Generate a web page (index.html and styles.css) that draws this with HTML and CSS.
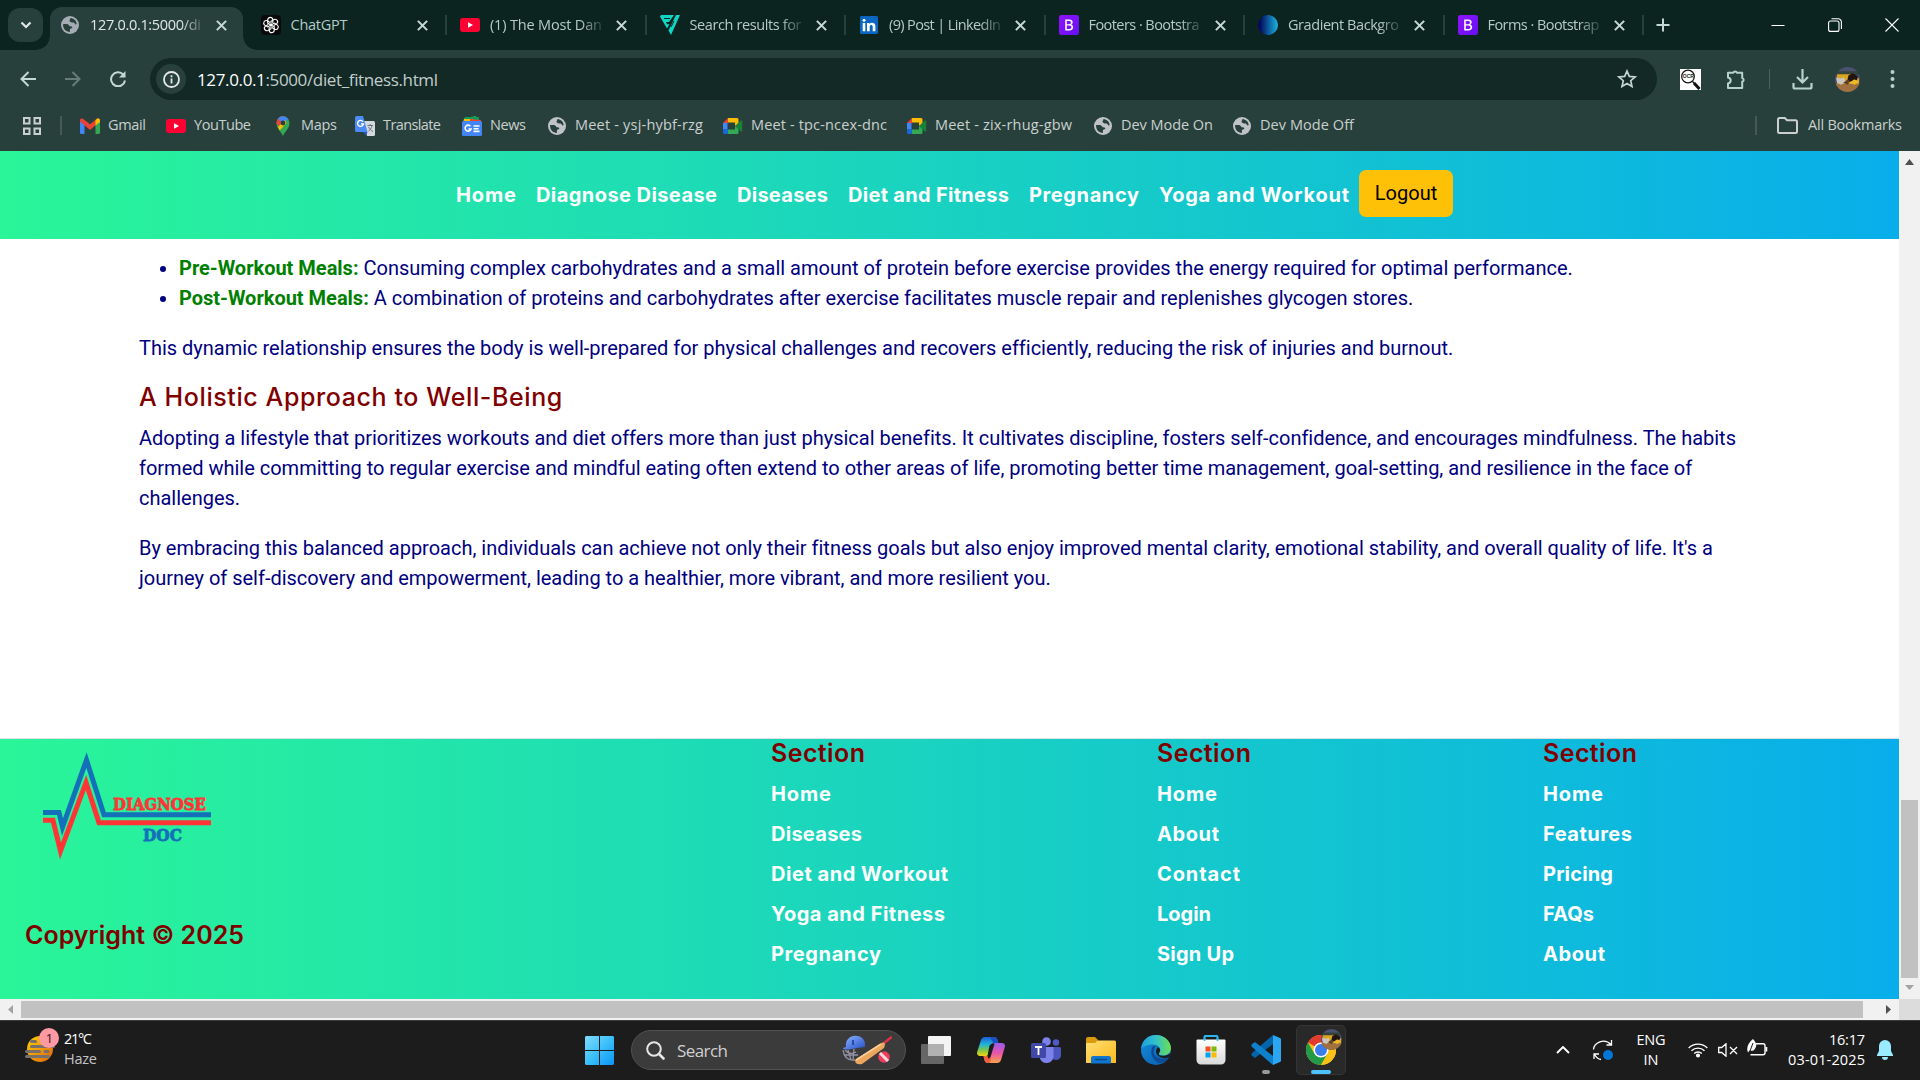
FILE: index.html
```html
<!DOCTYPE html>
<html lang="en">
<head>
<meta charset="utf-8">
<title>Diet and Fitness</title>
<link rel="stylesheet" href="styles.css">
</head>
<body>
<svg class="defs" width="0" height="0" aria-hidden="true">
  <defs>
    <linearGradient id="gBoot" x2="1" y2="1"><stop stop-color="#9013fe"/><stop offset="1" stop-color="#6610f2"/></linearGradient>
    <linearGradient id="gOrb"><stop offset=".1" stop-color="#020a5e"/><stop offset="1" stop-color="#1cb5e0"/></linearGradient>
    <linearGradient id="gWin" x2="1" y2="1"><stop stop-color="#7fdcff"/><stop offset=".5" stop-color="#3cc0fa"/><stop offset="1" stop-color="#0a94f5"/></linearGradient>
    <linearGradient id="gSun" x2="1" y2="1"><stop stop-color="#ffd500"/><stop offset="1" stop-color="#e0600a"/></linearGradient>
    <linearGradient id="gCopA" x2="0" y2="1"><stop stop-color="#1b5fd8"/><stop offset=".4" stop-color="#22b5d8"/><stop offset=".7" stop-color="#7fc744"/><stop offset="1" stop-color="#f5d312"/></linearGradient>
    <linearGradient id="gCopB" x2="0" y2="1"><stop stop-color="#9a5cf0"/><stop offset=".5" stop-color="#e855a8"/><stop offset="1" stop-color="#ffa24a"/></linearGradient>
    <linearGradient id="gFold" x2="1" y2="1"><stop stop-color="#ffdf72"/><stop offset="1" stop-color="#fcb91c"/></linearGradient>
    <linearGradient id="gEdgeA"><stop stop-color="#1b9de2"/><stop offset=".5" stop-color="#35c1c8"/><stop offset="1" stop-color="#6be04f"/></linearGradient>
    <linearGradient id="gEdgeB" x2="1" y2="1"><stop stop-color="#1490df"/><stop offset="1" stop-color="#0a58a8"/></linearGradient>
    <linearGradient id="gStore" x2="0" y2="1"><stop stop-color="#fff"/><stop offset="1" stop-color="#d9d9d9"/></linearGradient>
    <linearGradient id="gHelm" x2="1" y2="1"><stop stop-color="#8fb4ff"/><stop offset="1" stop-color="#2450c8"/></linearGradient>
    <symbol id="globe" viewBox="0 0 18 18"><circle cx="9" cy="9" r="9" fill="currentColor"/><path class="land" d="M9.5 2c3.500.3 6 3 6.200 6-1 .8-1.700.2-2-.6-.4-1-1.300-.8-2.300-.8-1 0-1.300-.8-2-.9-.9-.1-1.200-1.200-.6-1.800zM2.100 8l3.800.1c1.300.1 2 1 2.300 1.700.4.800 2.500.2 3 1.200.3.800-.3 1.400-1.300 1.400-1 .1-1 .8-1 1.600v1.900C5 15.900 1.800 13 2.100 8z"/></symbol>
    <symbol id="close" viewBox="0 0 10 10"><path d="M.8.8l8.400 8.400M9.200.8L.8 9.200" stroke="currentColor" stroke-width="1.900" fill="none"/></symbol>
    <symbol id="yt" viewBox="0 0 20 14"><rect width="20" height="14" rx="3" fill="#f03"/><path d="M8 4.200v5.600l5-2.800z" fill="#fff"/></symbol>
    <symbol id="boot" viewBox="0 0 20 20"><rect width="20" height="20" rx="2.500" fill="url(#gBoot)"/><path d="M6.200 4.500h4.300c2 0 3.200 1 3.200 2.700 0 1.200-.7 2-1.700 2.400 1.400.3 2.200 1.300 2.200 2.700 0 2-1.400 3.200-3.700 3.200H6.200zM7.800 6v3.200h2.300c1.200 0 1.900-.6 1.900-1.600S11.300 6 10.200 6zM7.800 10.500V14h2.500c1.400 0 2.100-.6 2.100-1.700s-.8-1.800-2.200-1.800z" fill="#fff"/></symbol>
    <symbol id="meet" viewBox="0 0 20 16"><path d="M5 0v5H0z" fill="#ea4335"/><path d="M0 5h4.500v6H0z" fill="#4285f4"/><path d="M0 11h5v5H1.500A1.500 1.500 0 010 14.500z" fill="#1967d2"/><path d="M5 0h9a1.500 1.500 0 011.500 1.500V6L12 8V4.500H5z" fill="#fbbc04"/><path d="M5 11.500h7V8l3.500 2v4.500A1.500 1.500 0 0114 16H5z" fill="#34a853"/><path d="M12 8l6-5.500c.6-.5 1.200-.2 1.200.5v10c0 .7-.6 1-1.200.5z" fill="#188038"/></symbol>
    <symbol id="face" viewBox="0 0 24 24"><clipPath id="fc"><circle cx="12" cy="12" r="12"/></clipPath><g clip-path="url(#fc)"><path fill="#4a5270" d="M0 0h24v24H0z"/><path fill="#34443c" d="M0 4h24v4H0z"/><path fill="#dba520" d="M2 7h14l7 4v6H2z"/><path fill="#a0703f" d="M0 16h24v8H0z"/><path fill="#20150f" d="M13 8l4-2 5 3-1 4-3-1-3 3-3-3z"/><path fill="#c9c4c0" d="M1 10l4 1 4-1 1 4-4 3-4-2z"/><path fill="#5d4029" d="M8 15l4-3 3 2-3 3z"/><path fill="#f0ba27" d="M13 15l6-3 4 2-4 3z"/></g></symbol>
  </defs>
</svg>

<header class="browser">
  <div class="tabstrip">
    <button class="tab-search"><svg width="12" height="8" viewBox="0 0 12 8"><path d="M1.500 1.500L6 6l4.500-4.500" fill="none" stroke="#dfe8e6" stroke-width="2.200"/></svg></button>
    <div class="tabs">
      <div class="tab active"><svg class="fav globe"><use href="#globe"/></svg><span class="title"><span data-fit="111">127.0.0.1:5000/di</span></span><svg class="x"><use href="#close"/></svg></div>
      <div class="tab"><svg class="fav" viewBox="0 0 20 20"><rect width="20" height="20" rx="4" fill="#0a0a0a"/><g fill="none" stroke="#fff" stroke-width="1.100"><path id="petal" d="M10 10.300V6.200l3-1.700c3-1 5 2.500 2.500 4.400l-2.800 1.600"/><use href="#petal" transform="rotate(60 10 10)"/><use href="#petal" transform="rotate(120 10 10)"/><use href="#petal" transform="rotate(180 10 10)"/><use href="#petal" transform="rotate(240 10 10)"/><use href="#petal" transform="rotate(300 10 10)"/></g></svg><span class="title short"><span data-fit="57">ChatGPT</span></span><svg class="x"><use href="#close"/></svg></div>
      <div class="tab"><svg class="fav" viewBox="0 0 20 14"><use href="#yt"/></svg><span class="title"><span data-fit="112">(1) The Most Dan</span></span><svg class="x"><use href="#close"/></svg></div>
      <div class="tab"><svg class="fav" viewBox="0 0 20 20"><path d="M1 0h13L9 7H6l1 2.300h2.500L7 13.500 0 1.500zM16 0h4L11 20l-2.500-4.500z" fill="#12d6c5"/><path d="M4 3.500h6M11 12l3-6" stroke="#0b2420"/></svg><span class="title"><span data-fit="112">Search results for</span></span><svg class="x"><use href="#close"/></svg></div>
      <div class="tab"><svg class="fav" viewBox="0 0 20 20"><rect x="1" y="1" width="18" height="18" rx="1.500" fill="#0a66c2"/><path d="M3.700 8h2.600v8.200H3.700zM8 8h2.500v1.200c1.400-2.200 5.900-2 5.900 2.200v4.800h-2.700v-4.400c0-2.400-3-2.300-3 0v4.400H8z" fill="#fff"/><circle cx="5" cy="5.300" r="1.500" fill="#fff"/></svg><span class="title"><span data-fit="112">(9) Post | LinkedIn</span></span><svg class="x"><use href="#close"/></svg></div>
      <div class="tab"><svg class="fav"><use href="#boot"/></svg><span class="title"><span data-fit="111">Footers · Bootstra</span></span><svg class="x"><use href="#close"/></svg></div>
      <div class="tab"><svg class="fav" viewBox="0 0 20 20"><circle cx="10" cy="10" r="10" fill="url(#gOrb)"/></svg><span class="title"><span data-fit="111">Gradient Backgro</span></span><svg class="x"><use href="#close"/></svg></div>
      <div class="tab"><svg class="fav"><use href="#boot"/></svg><span class="title"><span data-fit="112">Forms · Bootstrap</span></span><svg class="x"><use href="#close"/></svg></div>
    </div>
    <svg class="newtab" width="14" height="14" viewBox="0 0 14 14"><path d="M7 .5v13M.5 7h13" stroke="#c5d8d4" stroke-width="2"/></svg>
    <div class="winctl">
      <svg width="14" height="14" viewBox="0 0 14 14"><path d="M.5 7.500h13" stroke="#fff"/></svg>
      <svg width="14" height="14" viewBox="0 0 14 14" fill="none" stroke="#fff" stroke-width="1.100"><rect x=".6" y="3" width="10.400" height="10.400" rx="2"/><path d="M3.500.7H10A3.300 3.300 0 0113.400 4v7"/></svg>
      <svg width="14" height="14" viewBox="0 0 14 14"><path d="M.5.5l13 13M13.500.5l-13 13" stroke="#fff" stroke-width="1.100"/></svg>
    </div>
  </div>

  <div class="toolbar">
    <div class="navbtns">
      <svg width="16" height="16" viewBox="0 0 16 16"><path d="M16 8H1.500M8.500 1L1.500 8l7 7" fill="none" stroke="#c1d8d3" stroke-width="2"/></svg>
      <svg width="16" height="16" viewBox="0 0 16 16"><path d="M0 8h14.500M7.500 1l7 7-7 7" fill="none" stroke="#667c78" stroke-width="2"/></svg>
      <svg width="16" height="16" viewBox="0 0 16 16"><path d="M13.200 3.500A7 7 0 1015 9.500" fill="none" stroke="#c1d8d3" stroke-width="2"/><path d="M15.500 0v6.500H9z" fill="#c1d8d3"/></svg>
    </div>
    <div class="omnibox">
      <span class="info"><svg width="17" height="17" viewBox="0 0 17 17"><circle cx="8.500" cy="8.500" r="7.500" fill="none" stroke="#e3e9e8" stroke-width="1.800"/><path d="M8.500 7.500v5M8.500 4.300v2" stroke="#e3e9e8" stroke-width="1.800"/></svg></span>
      <span class="url" data-fit="241"><b>127.0.0.1</b>:5000/diet_fitness.html</span>
      <svg class="star" width="20" height="20" viewBox="0 0 20 20"><path d="M10 2l2.300 5.400 5.800.5-4.400 3.800 1.300 5.700-5-3-5 3 1.300-5.700L1.900 7.900l5.800-.5z" fill="none" stroke="#c6d3d0" stroke-width="1.700"/></svg>
    </div>
    <div class="tools">
      <svg width="21" height="21" viewBox="0 0 21 21"><path fill="#fff" d="M0 0h21v21H0z"/><circle cx="8" cy="7.500" r="6.300" fill="#fff" stroke="#111" stroke-width="1.200"/><path d="M12.500 12.500l2 2" stroke="#111" stroke-width="1.500"/><path d="M14 14l5.500 6" stroke="#111" stroke-width="3"/><text x="2.800" y="9.300" class="ocr">OCR</text></svg>
      <svg class="puzzle" width="21" height="21" viewBox="0 0 21 21"><path d="M2 3.800h5.300a1.900 1.900 0 013.600 0h5.300v5.300a1.900 1.900 0 010 3.700v6.200H2v-4.500c3.600-1 3.600-5.200 0-6z" fill="none" stroke="#b5d2cc" stroke-width="2" stroke-linejoin="round"/></svg>
      <i class="vline"></i>
      <svg class="dl" width="21" height="21" viewBox="0 0 21 21"><path d="M10.500 0v13M5 8l5.500 5.500L16 8M1.500 14v4a1.500 1.500 0 001.500 1.500h15a1.500 1.500 0 001.500-1.500v-4" fill="none" stroke="#b5d2cc" stroke-width="2.200"/></svg>
      <svg class="avatar" width="25" height="25"><use href="#face"/></svg>
      <svg class="dots" width="5" height="18" viewBox="0 0 5 18" fill="#b5d2cc"><circle cx="2.500" cy="2" r="2"/><circle cx="2.500" cy="9" r="2"/><circle cx="2.500" cy="16" r="2"/></svg>
    </div>
  </div>

  <div class="bookmarks">
    <svg class="apps" width="18" height="18" viewBox="0 0 18 18" fill="none" stroke="#c9d0ce" stroke-width="2"><path d="M1 1h5.500v5.500H1zM11.500 1H17v5.500h-5.500zM1 11.500h5.500V17H1zM11.500 11.500H17V17h-5.500z"/></svg>
    <i class="bar"></i>
    <div class="marks">
      <div><svg viewBox="0 0 20 16"><path d="M0 3v11.500A1.500 1.500 0 001.500 16h3V6z" fill="#4285f4"/><path d="M15.500 6v10h3a1.500 1.500 0 001.500-1.500V3z" fill="#34a853"/><path d="M0 2.500C0 .5 2 0 3.300 1L10 6.200 16.700 1C18 0 20 .5 20 2.500v1L10 12 0 3.500z" fill="#ea4335"/><path d="M15.500 2l1.200-1C18 0 20 .5 20 2.500V4l-4.500 3.500z" fill="#fbbc04"/></svg><span data-fit="38">Gmail</span></div>
      <div><svg viewBox="0 0 20 14"><use href="#yt"/></svg><span data-fit="57">YouTube</span></div>
      <div><svg viewBox="0 0 20 20"><path d="M10 20c-1.200-3.500-6.500-7-6.500-13.200A6.500 6.500 0 0116.500 6.800C16.500 13 11.200 16.500 10 20z" fill="#34a853"/><path d="M3.500 7A6.500 6.500 0 0113 1l-7 9c-1.500-1-2.500-2-2.500-3z" fill="#ea4335"/><path d="M5 2.600A6.500 6.500 0 0115.500 3.500L10 8z" fill="#4285f4"/><path d="M5 11l7-7 1.500 3-6.800 7.500z" fill="#fbbc04"/><circle cx="10" cy="7" r="2.400" fill="#28403c"/></svg><span data-fit="36">Maps</span></div>
      <div><svg viewBox="0 0 20 20"><path d="M8 5h10.500A1.500 1.500 0 0120 6.500v12a1.500 1.500 0 01-1.500 1.500H12z" fill="#d5d8dc"/><path d="M1.500 0H8l4.500 16H1.500A1.500 1.500 0 010 14.500v-13A1.500 1.500 0 011.500 0z" fill="#4c8bf5"/><path d="M8 16h4.500L11 19.500z" fill="#2255c4"/><path d="M8 5.700A3 3 0 108.500 8H6" fill="none" stroke="#fff" stroke-width="1.300"/><path d="M12.500 9.500H18M15.200 8v1.500M17 9.500c-.5 3-2 4.500-3.500 5.500M13.500 11c1 2 2.500 3.500 4.500 4.500" fill="none" stroke="#6b7480"/></svg><span data-fit="58">Translate</span></div>
      <div><svg viewBox="0 0 20 20"><path d="M2 2l12-2 1 6H3z" fill="#34a853"/><path d="M3 1h14v5H3z" fill="#0c9d58"/><path d="M2 3h9l-1 4H1z" fill="#fbbc04"/><path d="M8 3l11 1-1 4H8z" fill="#ea4335"/><rect y="5" width="20" height="15" rx="1.500" fill="#4285f4"/><path d="M8.500 10.300A3 3 0 109 13H6.500M11.500 10h6M11.500 12.700h5M11.500 15.400h6" fill="none" stroke="#fff" stroke-width="1.600"/></svg><span data-fit="36">News</span></div>
      <div><svg class="globe2"><use href="#globe"/></svg><span data-fit="128">Meet - ysj-hybf-rzg</span></div>
      <div><svg viewBox="0 0 20 16"><use href="#meet"/></svg><span data-fit="136">Meet - tpc-ncex-dnc</span></div>
      <div><svg viewBox="0 0 20 16"><use href="#meet"/></svg><span data-fit="137">Meet - zix-rhug-gbw</span></div>
      <div><svg class="globe2"><use href="#globe"/></svg><span data-fit="92">Dev Mode On</span></div>
      <div><svg class="globe2"><use href="#globe"/></svg><span data-fit="94">Dev Mode Off</span></div>
    </div>
    <i class="bar right"></i>
    <div class="all"><svg width="21" height="17" viewBox="0 0 21 17"><path d="M1 2.500A1.500 1.500 0 012.500 1h5.300l2.200 2.300h8.500A1.500 1.500 0 0120 4.800v9.700a1.500 1.500 0 01-1.500 1.500h-16A1.500 1.500 0 011 14.500z" fill="none" stroke="#c9d0ce" stroke-width="2"/></svg><span data-fit="94">All Bookmarks</span></div>
  </div>
</header>

<div class="viewport">
  <div class="page">
    <nav class="sitenav">
      <a data-fit="60">Home</a><a data-fit="181">Diagnose Disease</a><a data-fit="91">Diseases</a><a data-fit="161">Diet and Fitness</a><a data-fit="110">Pregnancy</a><a data-fit="190">Yoga and Workout</a>
      <button class="logout">Logout</button>
    </nav>
    <main class="content">
      <ul>
        <li><strong>Pre-Workout Meals:</strong> Consuming complex carbohydrates and a small amount of protein before exercise provides the energy required for optimal performance.</li>
        <li><strong>Post-Workout Meals:</strong> A combination of proteins and carbohydrates after exercise facilitates muscle repair and replenishes glycogen stores.</li>
      </ul>
      <p>This dynamic relationship ensures the body is well-prepared for physical challenges and recovers efficiently, reducing the risk of injuries and burnout.</p>
      <h5><span data-fit="423">A Holistic Approach to Well-Being</span></h5>
      <p>Adopting a lifestyle that prioritizes workouts and diet offers more than just physical benefits. It cultivates discipline, fosters self-confidence, and encourages mindfulness. The habits formed while committing to regular exercise and mindful eating often extend to other areas of life, promoting better time management, goal-setting, and resilience in the face of challenges.</p>
      <p>By embracing this balanced approach, individuals can achieve not only their fitness goals but also enjoy improved mental clarity, emotional stability, and overall quality of life. It's a journey of self-discovery and empowerment, leading to a healthier, more vibrant, and more resilient you.</p>
    </main>
    <footer class="sitefoot">
      <div class="brand">
        <svg class="logo" width="170" height="112" viewBox="0 0 170 112" fill="none" stroke-width="5" stroke-miterlimit="10">
          <path d="M1 64.500h16l3.500 14.500L44.500 12l17.500 54.800h107" stroke="#1470b8"/>
          <path d="M1 72.300h10L18.500 103 44 34.500l13 40.300h112" stroke="#ff3434"/>
          <text x="71" y="61.500" textLength="93" lengthAdjust="spacingAndGlyphs" class="l1">DIAGNOSE</text>
          <text x="101" y="92.500" textLength="39" lengthAdjust="spacingAndGlyphs" class="l2">DOC</text>
        </svg>
        <h5><span data-fit="219">Copyright © 2025</span></h5>
      </div>
      <div class="col"><h5><span data-fit="94">Section</span></h5><a data-fit="60">Home</a><a data-fit="91">Diseases</a><a data-fit="177">Diet and Workout</a><a data-fit="174">Yoga and Fitness</a><a data-fit="110">Pregnancy</a></div>
      <div class="col"><h5><span data-fit="94">Section</span></h5><a data-fit="60">Home</a><a data-fit="62">About</a><a data-fit="83">Contact</a><a data-fit="54">Login</a><a data-fit="77">Sign Up</a></div>
      <div class="col"><h5><span data-fit="94">Section</span></h5><a data-fit="60">Home</a><a data-fit="89">Features</a><a data-fit="70">Pricing</a><a data-fit="51">FAQs</a><a data-fit="62">About</a></div>
    </footer>
  </div>
  <div class="vscroll"><svg width="9" height="6" viewBox="0 0 9 6"><path d="M0 6l4.500-6L9 6z" fill="#505050"/></svg><i></i><svg width="9" height="5" viewBox="0 0 9 5"><path d="M0 0l4.500 5L9 0z" fill="#a3a3a3"/></svg></div>
  <div class="hscroll"><svg width="5" height="9" viewBox="0 0 5 9"><path d="M5 0L0 4.500 5 9z" fill="#a3a3a3"/></svg><i></i><svg width="5" height="9" viewBox="0 0 5 9"><path d="M0 0l5 4.500L0 9z" fill="#505050"/></svg></div>
  <div class="corner"></div>
</div>

<div class="taskbar">
  <div class="weather">
    <svg width="36" height="36" viewBox="0 0 36 36"><circle cx="16" cy="22" r="13" fill="url(#gSun)"/><path d="M7.500 14.500h4M7.500 19.500h22M2.500 24.500h13M21 24.500h3M2.500 29.500h22" stroke="#77716a" stroke-width="3" stroke-linecap="round"/><circle cx="25" cy="11" r="10" fill="#ff99a4"/><text x="21.500" y="16" class="badge">1</text></svg>
    <div><span data-fit="28">21°C</span><span class="dim" data-fit="33">Haze</span></div>
  </div>
  <div class="dock">
    <span class="cell"><svg width="29" height="29" viewBox="0 0 29 29"><path d="M1 0h13v14H0V1zM15 0h13l1 1v13H15zM0 15h14v14H1l-1-1zM15 15h14v13l-1 1H15z" fill="url(#gWin)"/></svg></span>
    <div class="search">
      <svg width="19" height="19" viewBox="0 0 19 19"><circle cx="8" cy="8" r="6.800" fill="none" stroke="#e6e6e6" stroke-width="2"/><path d="M13 13l4.500 4.500" stroke="#e6e6e6" stroke-width="2.600" stroke-linecap="round"/></svg>
      <span data-fit="51">Search</span>
      <svg class="cricket" width="50" height="30" viewBox="0 0 50 30"><path d="M1 15c1 7 5 11 12 10M3 15c3 4 8 4 11 2M6 15l3 10M12 14l-1 11M2 20h14" fill="none" stroke="#9591a8" stroke-width="1.300"/><path d="M4 12C3 4 9 0 15 1c6 0 9 6 8 11l-8 1c-4 1-9 2-14 1 0-1 1-2 3-2z" fill="url(#gHelm)"/><path d="M11 5v5" stroke="#18388d" stroke-width="1.500"/><path d="M42 8l7-5.500" stroke="#d9324a" stroke-width="2.500" stroke-linecap="round"/><path d="M13 25L38 9c3-2 5-2 5 1l-1 3-22 16c-4 1-7 0-7-4z" fill="#eba75e"/><path d="M14 25L39 9" stroke="#ffd09a" stroke-width="1.500"/><circle cx="42" cy="22" r="5.800" fill="#ef3d5c"/><path d="M38 18l8 8" stroke="#ffd9df" stroke-width="3"/></svg>
    </div>
    <span class="cell"><svg width="30" height="28" viewBox="0 0 30 28"><rect x="7" width="23" height="20" rx="1" fill="#f4f4f4"/><rect y="8" width="23" height="20" rx="1" fill="#666"/><path d="M7 8h16v12H7z" fill="#b1b1b1"/></svg></span>
    <span class="cell"><svg width="28" height="26" viewBox="0 0 28 26"><path fill-rule="evenodd" d="M8 0h9c2 0 3 1 3.500 3l.8 3h-3.800c-2 0-3 1-3.500 3l-2.500 8c-.6 1.500-1.500 2-3 2H3c-2.500 0-3.500-2-2.700-4.500L4 3c.7-2 2-3 4-3z" fill="url(#gCopA)"/><path d="M13 0h4c2 0 3 1 3.500 3l.8 3h-5z" fill="#1d4fc4"/><path d="M20 26h-9c-2 0-3-1-3.500-3l-1-4H9c2 0 3-1 3.500-3L15 9c.6-2 1.500-3 3.500-3H25c2.500 0 3.500 2 2.700 4.500L24 23c-.7 2-2 3-4 3z" fill="url(#gCopB)"/><path d="M6.500 19h4.500c2 0 3 1 3 3l-1 4h-2c-2 0-3-1-3.500-3z" fill="#f0603c"/><path d="M12.500 8.500l2.500-2 2.500.5-4 13-2 2-1-3z" fill="#1c1c1c"/></svg></span>
    <span class="cell"><svg width="30" height="27" viewBox="0 0 30 27"><circle cx="25" cy="5.500" r="3.200" fill="#5059c9"/><path d="M20 10h8.500A1.500 1.500 0 0130 11.500V18a5 5 0 01-9 3z" fill="#4b53bc"/><circle cx="15.500" cy="4.500" r="4.300" fill="#7b83eb"/><path d="M9 10h13.500v9.500a7 7 0 01-13.500 2z" fill="#7b83eb"/><rect y="6" width="15" height="15" rx="1.500" fill="#4048a8"/><path d="M4 10h7M7.500 10v8" stroke="#fff" stroke-width="1.800"/></svg></span>
    <span class="cell"><svg width="30" height="27" viewBox="0 0 30 27"><path d="M0 2a2 2 0 012-2h7l3 3v5H0z" fill="#d99c0c"/><path d="M0 6h9l3-2.500h16.500A1.500 1.500 0 0130 5v21H0z" fill="url(#gFold)"/><path d="M5 26.500V21a2 2 0 012-2h16a2 2 0 012 2v5.500z" fill="#1077cf"/><path d="M9 22.500h12" stroke="#0a4d8c" stroke-width="1.500"/></svg></span>
    <span class="cell"><svg width="30" height="30" viewBox="0 0 30 30"><circle cx="15" cy="15" r="15" fill="url(#gEdgeB)"/><path d="M0 14C1 5 7 0 15 0c9 0 15 7 15 13 0 5-4 7.500-8 7.500-3 0-4.500-1-4-2 3-4 0-9-6-9-5 0-10 2-12 4.500z" fill="url(#gEdgeA)"/><path d="M12 11c-4 6-1 15 7 17 4 0 7-3 9-6-8 4-17 0-15-7 .5-2 1-3 2-3.700z" fill="#0c4c96"/><path d="M18.500 17c-.8 1.500-1 2.500 0 3.300 3 1.200 8 .5 11.500-2.300l-1.500 4c-6 2.500-13 0-13.500-5.500 0-2 1-3.500 2-4.300 2 .8 3 3 1.500 4.800z" fill="#1c1c1c"/></svg></span>
    <span class="cell"><svg width="30" height="30" viewBox="0 0 30 30"><path d="M8.500 6V2a1 1 0 011-1h11a1 1 0 011 1v4" fill="none" stroke="#2db4ee" stroke-width="2"/><path d="M.5 5.500A1 1 0 011.500 4.500h27a1 1 0 011 1V25a4.500 4.500 0 01-4.500 4.500H5A4.500 4.500 0 01.500 25z" fill="url(#gStore)"/><path d="M8.500 6V2a1 1 0 011-1h11a1 1 0 011 1v4" fill="none" stroke="#2db4ee" stroke-width="1.600"/><path d="M9.500 11.500h5v5h-5z" fill="#f25022"/><path d="M15.500 11.500h5v5h-5z" fill="#7fba00"/><path d="M9.500 17.500h5v5h-5z" fill="#00a4ef"/><path d="M15.500 17.500h5v5h-5z" fill="#ffb900"/></svg></span>
    <span class="cell run"><svg width="30" height="30" viewBox="0 0 30 30"><path d="M22 0v9L4 23 .5 20.500v-2z" fill="#0065a9"/><path d="M22 30v-9L4 7 .5 9.500v2z" fill="#0f80cc"/><path d="M22 0l7 3a2 2 0 011 2v20a2 2 0 01-1 2l-7 3z" fill="#2aa6f2"/></svg><i></i></span>
    <span class="cell run on"><svg width="30" height="30" viewBox="0 0 30 30"><circle cx="15" cy="15" r="15" fill="#fbc116"/><path d="M15 15L2 7.500A15 15 0 0128 7.500H15z" fill="#e33b2e"/><path d="M2 7.500A15 15 0 0015 30l6.500-11.200L15 15 8.500 18.800z" fill="#219b47"/><path d="M15 7.500h13A15 15 0 0115 30l6.500-11.200z" fill="#fbc116"/><circle cx="15" cy="15" r="7.500" fill="#fff"/><circle cx="15" cy="15" r="6" fill="#3b7ded"/></svg><svg class="who"><use href="#face"/></svg><i></i></span>
  </div>
  <div class="tray">
    <svg width="14" height="8" viewBox="0 0 14 8"><path d="M1 7l6-6 6 6" fill="none" stroke="#fff" stroke-width="1.900"/></svg>
    <svg class="sync" width="22" height="22" viewBox="0 0 22 22"><path d="M1.500 10.500C2 4 12-1.500 19 5.500M19.500 1v5h-5M9 20.500C6 20 4 18 2.500 15.500M2 20v-5h5" fill="none" stroke="#fff" stroke-width="1.300"/><circle cx="16" cy="16" r="5" fill="#0078d7"/></svg>
    <div class="lang"><span data-fit="29">ENG</span><span data-fit="15">IN</span></div>
    <svg class="wifi" width="20" height="16" viewBox="0 0 20 16" fill="none" stroke="#fff" stroke-width="1.400"><path d="M.7 6a13 13 0 0118.600 0M3.500 8.800a9.200 9.200 0 0113 0M6.200 11.500a5.400 5.400 0 017.600 0"/><circle cx="10" cy="13.500" r="1.400" fill="#fff"/></svg>
    <svg class="mute" width="20" height="14" viewBox="0 0 20 14" fill="none" stroke="#fff" stroke-width="1.300"><path d="M.7 4.500h3L8 .8v12.400L3.700 9.500h-3zM12 4l7 7M19 4l-7 7"/></svg>
    <svg class="batt" width="21" height="18" viewBox="0 0 21 18"><path d="M9 4.700h7a2 2 0 012 2v7a2 2 0 01-2 2H3.500" fill="none" stroke="#fff" stroke-width="1.400"/><path d="M18.500 8h1.800v4.500h-1.800z" fill="#fff"/><path d="M6 0c3 3 5 7 1 11-1 1-3 1-4.500.5L1 13.500C-1 9 1 4 6 0z" fill="#fff"/><path d="M6 4L3 12" stroke="#1c1c1c"/></svg>
    <div class="clock"><span data-fit="36">16:17</span><span data-fit="77">03-01-2025</span></div>
    <svg class="bell" width="16" height="20" viewBox="0 0 16 20"><path d="M8 0a6 6 0 016 6v5l2 4v1H0v-1l2-4V6a6 6 0 016-6zM5 17h6a3 3 0 01-6 0z" fill="#99ebff"/></svg>
  </div>
</div>
<script src="fit.js"></script>
</body>
</html>
```
FILE: fit.js
```js
// Tracks each label so that it fills the width given in its data-fit attribute.
document.querySelectorAll('[data-fit]').forEach(function (el) {
  var range = document.createRange();
  range.selectNodeContents(el);
  var natural = range.getBoundingClientRect().width;
  var spacing = (Number(el.dataset.fit) - natural) / (el.textContent.length - 1);
  el.style.letterSpacing = spacing.toFixed(3) + 'px';
  el.style.marginRight = (-spacing).toFixed(3) + 'px';
});
```
FILE: styles.css
```css
* { box-sizing: border-box; }
body { margin: 0; width: 1920px; height: 1080px; overflow: hidden; display: flex; flex-direction: column; font-family: "Open Sans", "Noto Sans", sans-serif; background: #fff; }
svg { display: block; flex: none; }
.defs { position: absolute; }
button { border: 0; padding: 0; font: inherit; }
span, a { white-space: nowrap; }

.browser { height: 151px; background: #28403c; flex: none; }
.tabstrip { height: 50px; background: #0b2420; display: flex; align-items: center; }
.tab-search { width: 35px; height: 34px; margin-left: 8px; border-radius: 12px; background: #28403c; display: grid; place-items: center; }
.tabs { width: 1595px; margin-left: 5px; height: 50px; display: grid; grid-template-columns: repeat(8, 199.5px); }
.tab { display: flex; align-items: center; padding-left: 13px; height: 50px; color: #b5cbc7; font-size: 14.500px; background: linear-gradient(#28403c, #28403c) right 15px / 2px 20px no-repeat; }
.tab.active { position: relative; margin: 7px 5px 0 2px; height: 43px; padding: 0 0 7px 10px; background: #28403c; border-radius: 12px 12px 0 0; color: #e0e8e6; }
.tab.active::before, .tab.active::after { content: ""; position: absolute; bottom: 0; width: 14px; height: 14px; }
.tab.active::before { left: -14px; background: radial-gradient(circle at 0 0, transparent 13.500px, #28403c 14px); }
.tab.active::after { right: -14px; background: radial-gradient(circle at 100% 0, transparent 13.500px, #28403c 14px); }
.tab.active + .tab { background-size: 2px 20px; }
.fav { width: 20px; height: 20px; margin-right: 10px; }
.fav.globe { width: 18px; height: 18px; color: #a4acb4; margin-left: 1px; margin-right: 11px; }
.land { fill: #28403c; }
.title { width: 113px; line-height: 24px; -webkit-mask-image: linear-gradient(90deg, #000 80%, rgba(0, 0, 0, .15)); mask-image: linear-gradient(90deg, #000 80%, rgba(0, 0, 0, .15)); }
.title.short { -webkit-mask-image: none; mask-image: none; }
.x { width: 11px; height: 11px; margin-left: 13px; color: #c5d8d4; }
.newtab { margin-left: 13px; }
.winctl { margin-left: auto; display: flex; gap: 43px; padding-right: 21px; }

.toolbar { height: 58px; display: flex; align-items: center; padding-left: 20px; background: #28403c; }
.navbtns { display: flex; gap: 29px; width: 130px; }
.omnibox { width: 1507px; height: 42px; border-radius: 21px; background: #122926; display: flex; align-items: center; padding-left: 6px; }
.info { width: 30px; height: 30px; border-radius: 50%; background: #28403c; display: grid; place-items: center; }
.url { margin-left: 11px; font-size: 17px; color: #c3cecb; }
.url b { font-weight: 400; color: #fff; }
.star { margin: 0 20px 0 auto; }
.tools { flex: 1; display: flex; align-items: center; padding-left: 23px; }
.puzzle { margin-left: 25px; }
.vline { width: 1px; height: 20px; margin: 0 22px; background: #4b625e; }
.avatar { margin-left: 22px; }
.dots { margin-left: 30px; }
.ocr { font: bold 5px "Liberation Sans", sans-serif; fill: #222; }

.bookmarks { height: 35px; display: flex; align-items: center; padding-left: 23px; color: #c9d0ce; font-size: 14.500px; }
.bookmarks span { line-height: 20px; margin-top: -1px; }
.bar { width: 2px; height: 19px; background: #455a57; margin-left: 19px; }
.marks { display: grid; grid-template-columns: 86px 107px 82px 107px 85px 176px 184px 186px 139px 130px; margin-left: 18px; }
.marks div { display: flex; align-items: center; gap: 8px; }
.marks svg { width: 20px; height: 20px; }
.marks svg.globe2 { width: 18px; height: 18px; margin: 0 1px; color: #bfc3c7; }
.bar.right { margin-left: auto; }
.all { display: flex; align-items: center; gap: 10px; margin: 0 18px 0 20px; }

.viewport { height: 869px; display: grid; grid-template: 848px 21px / 1899px 21px; }
.page { overflow: hidden; display: flex; flex-direction: column; background: #fff; font-family: Roboto, sans-serif; font-size: 20px; line-height: 30px; color: #000080; }
.sitenav { height: 88px; flex: none; display: flex; align-items: center; gap: 20px; padding-left: 456px; background: linear-gradient(90deg, #2af598, #08aeea); }
.sitenav a, .col a { font: 700 20px/30px Inter, "Open Sans", sans-serif; color: #fff; }
.logout { width: 94px; height: 47px; margin: -3px 0 0 -10px; padding-bottom: 2px; border-radius: 7px; background: #ffc107; color: #000; font: 20px Roboto, sans-serif; }
.content { padding: 14px 139px 0; height: 499px; flex: none; letter-spacing: -.008px; }
.content ul { margin: 0 0 20px; padding-left: 40px; }
.content strong { color: #008000; }
.content p { margin: 0 0 20px; }
h5 { margin: -1px 0 11px; font: 500 25px/30px Inter, "Open Sans", sans-serif; color: #800000; }
.sitefoot { height: 261px; border-top: 1px solid #dee2e6; display: grid; grid-template-columns: 771px 386px 386px 356px; background: linear-gradient(90deg, #2af598, #08aeea); }
.sitefoot h5 { font-weight: 600; }
.brand { padding: 9px 0 0 25px; }
.logo { margin: 0 0 61px 17px; }
.logo text { stroke: none; font: bold 17.500px "DejaVu Serif", serif; }
.logo .l1 { fill: #ff3434; stroke: #ff3434; stroke-width: .8; }
.logo .l2 { fill: #1470b8; stroke: #1470b8; stroke-width: .8; }
.col { display: flex; flex-direction: column; align-items: flex-start; gap: 10px; }
.col h5 { margin: -1px 0 1px; }

.vscroll, .hscroll { background: #f1f1f1; display: flex; align-items: center; }
.vscroll { flex-direction: column; padding: 8px 0 9px; }
.vscroll i { width: 17px; height: 178px; background: #c1c1c1; margin: auto 0 7px; }
.hscroll { padding: 0 8px; }
.hscroll i { width: 1842px; height: 17px; background: #c1c1c1; margin: 0 auto 0 8px; }
.corner { background: #dcdcdc; }

.taskbar { height: 60px; border-top: 1px solid #3a3a3a; background: #1c1c1c; color: #fff; font-size: 14.500px; display: grid; grid-template-columns: 574px 982px 364px; }
.weather { display: flex; padding: 6px 0 0 24px; gap: 4px; }
.weather div, .lang, .clock { display: flex; flex-direction: column; line-height: 20px; }
.weather div { padding-top: 2px; }
.weather div, .lang, .clock { align-items: flex-start; }
.dim { color: #c3c3c3; }
.badge { font: 13.500px "Open Sans", sans-serif; fill: #33181b; }
.dock { display: flex; gap: 5px; padding-top: 4px; }
.cell { width: 50px; height: 50px; display: grid; place-items: center; position: relative; }
.run i { position: absolute; left: 21px; bottom: 1px; width: 8px; height: 4px; border-radius: 2px; background: #999; }
.run.on { background: #292929; border: 1px solid #353535; border-radius: 5px; }
.run.on i { left: 14px; bottom: 0; width: 20px; background: #4cc2ff; }
.who { position: absolute; left: 24px; top: 3px; width: 21px; height: 21px; }
.search { width: 275px; height: 40px; margin: 5px 0 0 2px; border-radius: 20px; background: #3b3b3b; border: 1px solid #515151; display: flex; align-items: center; padding-left: 14px; font-size: 17px; color: #d0d0d0; }
.search span { margin-left: 12px; }
.cricket { margin: 0 13px 0 auto; }
.tray { display: flex; align-items: center; height: 58px; }
.lang, .clock { margin-top: -1px; }
.sync { margin-left: 22px; }
.tray .lang { width: 28px; margin-left: 23px; align-items: center; }
.wifi { margin-left: 23px; }
.mute { margin-left: 10px; }
.batt { margin: -4px 0 0 9px; }
.tray .clock { width: 77px; margin-left: 20px; align-items: flex-end; }
.bell { margin-left: 12px; }
```
